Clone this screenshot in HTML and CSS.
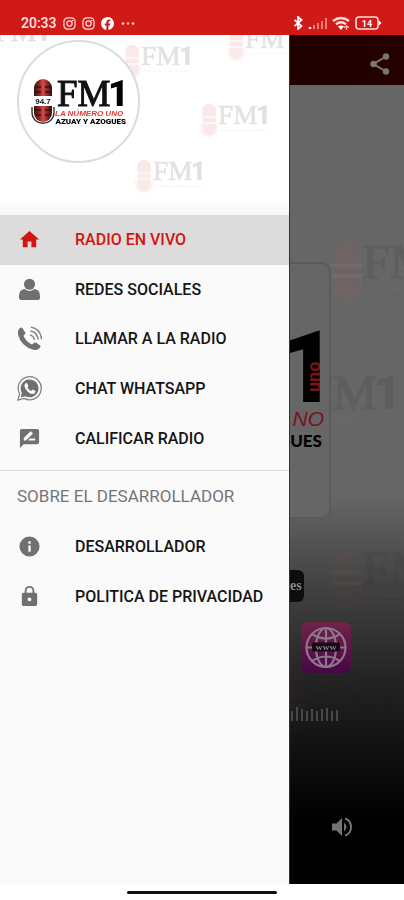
FILE: index.html
```html
<!DOCTYPE html>
<html lang="es">
<head>
<meta charset="utf-8">
<meta name="viewport" content="width=device-width, initial-scale=1">
<title>FM1 Radio</title>
<link rel="stylesheet" href="styles.css">
</head>
<body>
<svg class="defs" aria-hidden="true">
  <defs>
    <linearGradient id="mic-red" x1="0" x2="1">
      <stop offset="0" stop-color="#3a1414"/><stop offset=".3" stop-color="#8c2828"/><stop offset=".5" stop-color="#d84a48"/><stop offset=".75" stop-color="#8c2424"/><stop offset="1" stop-color="#301010"/>
    </linearGradient>
    <linearGradient id="web-pink" x1="0" y1="0" x2="0" y2="1">
      <stop offset="0" stop-color="#702447"/><stop offset="1" stop-color="#450745"/>
    </linearGradient>
    <symbol id="logo" viewBox="0 0 96 50">
      <rect x="3" y="2" width="18" height="43" rx="9" fill="url(#mic-red)"/>
      <path d="M4 10h6M14 10h6M4 15h6M14 15h6M4 33h6M14 33h6M5 38h5M14 38h5" stroke="#311" stroke-width="1.5"/>
      <path d="M0 19h24v10H0z" fill="#fff"/>
      <path d="M1 30v5c0 15 22 15 22 0v-5" fill="none" stroke="#333" stroke-width="1.4"/>
      <text x="12" y="27" class="logo-freq" text-anchor="middle">94.7</text>
      <text x="26" y="29" class="logo-fm">FM</text>
      <text x="77" y="29" class="logo-one">1</text>
      <text x="24" y="39" class="logo-script">LA NÚMERO UNO</text>
      <text x="95" y="47" class="logo-city" text-anchor="end">AZUAY Y AZOGUES</text>
    </symbol>
    <symbol id="mark" viewBox="0 0 94 50">
      <rect x="3" y="2" width="18" height="43" rx="9" fill="#c44"/>
      <path d="M0 19h24v3H0zM0 27h24v3H0z" fill="#fff" opacity=".6"/>
      <path d="M1 30v5c0 15 22 15 22 0v-5" fill="none" stroke="#c66" stroke-width="1.4"/>
      <text x="24" y="30" class="logo-fm">FM</text>
      <text x="75" y="30" class="logo-one">1</text>
      <path d="M26 38h66" stroke="#d88" stroke-width="3" stroke-dasharray="5 2" opacity=".5"/>
    </symbol>
    <symbol id="insta" viewBox="0 0 14 14">
      <rect x="1" y="1" width="12" height="12" rx="4" fill="none" stroke="#ffd9d6" stroke-width="1.3"/>
      <circle cx="7" cy="7" r="2.8" fill="none" stroke="#ffd9d6" stroke-width="1.3"/><circle cx="10.4" cy="3.8" r=".9" fill="#ffd9d6"/>
    </symbol>
  </defs>
</svg>

<div class="screen">
  <header class="status">
    <div class="status-left">
      <span class="clock">20:33</span>
      <svg width="13" height="13"><use href="#insta"/></svg>
      <svg width="13" height="13"><use href="#insta"/></svg>
      <svg width="13" height="13" viewBox="0 0 24 24"><path fill="#fff" d="M24 12a12 12 0 1 0-14 11.900V15.500H7V12h3V9.400C10 6.400 11.800 4.700 14.500 4.700c1.300 0 2.700.3 2.700.3v3h-1.500C14.200 8 13.800 8.900 13.800 9.800V12h3.300l-.5 3.500h-2.800v8.400A12 12 0 0 0 24 12z"/></svg>
      <svg width="16" height="13"><g fill="#ffc9c5"><circle cx="3" cy="6.500" r="1.300"/><circle cx="8" cy="6.500" r="1.300"/><circle cx="13" cy="6.500" r="1.300"/></g></svg>
    </div>
    <div class="status-right">
      <svg width="10" height="14" viewBox="0 0 10 16"><path d="M1 4.500l8 7L5 15V1l4 3.500-8 7" fill="none" stroke="#fff" stroke-width="2"/></svg>
      <svg width="19" height="13" viewBox="0 0 19 13"><path d="M2 10v2" stroke="#fff" stroke-width="2.500"/><path d="M6 8v4M10 6v6M14 4v8M18 1v11" stroke="#ee7b75" stroke-width="2"/></svg>
      <svg width="18" height="14" viewBox="0 0 18 14"><path d="M1 5q8-6 16 0M4 8.300q5-4 10 0" fill="none" stroke="#ffdcd9" stroke-width="2.300"/><path d="M6 10.500q3-2 6 0L9 14z" fill="#fff"/><path d="M12 11h5M14.500 9v5" stroke="#ffb5b0" stroke-width="1.300"/></svg>
      <svg width="27" height="14" viewBox="0 0 27 14"><rect x="1" y="1" width="22" height="12" rx="3" fill="none" stroke="#ffdcd9" stroke-width="1.600"/><path d="M24 4.500l2.500 2.500L24 9.500z" fill="#fff"/><text x="12" y="10.500" class="battery" text-anchor="middle">14</text></svg>
    </div>
  </header>

  <div class="body">
    <aside class="drawer">
      <div class="drawer-head">
        <svg class="marks" aria-hidden="true">
          <g opacity=".12">
            <use href="#mark" x="-25" y="-18" width="75" height="40"/>
            <use href="#mark" x="123" y="8" width="70" height="37"/>
            <use href="#mark" x="227" y="-9" width="70" height="37"/>
            <use href="#mark" x="200" y="67" width="70" height="37"/>
            <use href="#mark" x="135" y="123" width="70" height="37"/>
          </g>
        </svg>
        <div class="avatar"><svg width="96" height="50" role="img" aria-label="FM1"><use href="#logo"/></svg></div>
      </div>
      <nav>
        <ul class="menu main-menu">
          <li><a class="item active" href="#vivo"><svg class="icon" viewBox="0 0 24 24"><path d="M10 20v-6h4v6h5v-8h3L12 3 2 12h3v8z"/></svg>RADIO EN VIVO</a></li>
          <li><a class="item" href="#redes"><svg class="icon" viewBox="0 0 24 24"><circle cx="12" cy="6.500" r="5.800"/><path d="M7 11.500Q12 15.500 17 11.500Q23 12 23 19v1q0 3-3 3H4q-3 0-3-3v-1q0-7 6-7.500z"/></svg>REDES SOCIALES</a></li>
          <li><a class="item" href="#llamar"><svg class="icon wide" viewBox="0 0 26 26"><path d="M1.500 4Q4 .5 5.500 2.200L8.800 7Q9.200 8 6.700 10.200Q9 16 15.500 19.200L18 17.300Q19 16.700 20 17.500L24 20.300Q25 21 24 22.300Q21.500 25.500 18 25Q4 21.500 1 8.500Q.7 5.500 1.500 4z"/><path d="M13.500 9.500q4 .5 4.500 5M14 5.200q7 1 8 9M14.500 1.200q10 1.500 11 12.500" fill="none" stroke="#808080" stroke-width="1.500"/></svg>LLAMAR A LA RADIO</a></li>
          <li><a class="item" href="#chat"><svg class="icon wide" viewBox="0 0 26 26"><path d="M1 25l1.700-6.500A12 12 0 1 1 7.500 23.300z" fill="none" stroke="#808080" stroke-width="1.300"/><path d="M4 22l1-4.500A9.300 9.300 0 1 1 8.500 21z"/><path d="M8 8.500q1.500-2 2.700-.8l1.200 2.800-1 1.500q1.200 2.500 3.800 3.600l1.500-1.500 3 1.500q.5 1.500-1.200 2.600-3.500 1.500-7-2.200Q7 12 8 8.500z" fill="#fafafa"/></svg>CHAT WHATSAPP</a></li>
          <li><a class="item" href="#calificar"><svg class="icon" viewBox="0 0 24 24"><path d="M20 2H4c-1.100 0-2 .9-2 2v18l4-4h14c1.100 0 2-.9 2-2V4c0-1.100-.9-2-2-2zM6 14v-2.500l6.900-6.900c.2-.2.500-.2.700 0l1.800 1.800c.2.200.2.500 0 .7L8.500 14H6zm12 0h-7.500l2-2H18v2z"/></svg>CALIFICAR RADIO</a></li>
        </ul>
        <h2 class="subhead">SOBRE EL DESARROLLADOR</h2>
        <ul class="menu">
          <li><a class="item" href="#desarrollador"><svg class="icon" viewBox="0 0 24 24"><path d="M12 1.500a10.500 10.500 0 1 0 0 21 10.500 10.500 0 0 0 0-21zM13.200 17.500h-2.400V11h2.400zm0-8.500h-2.400V6.500h2.400z"/></svg>DESARROLLADOR</a></li>
          <li><a class="item" href="#privacidad"><svg class="icon" viewBox="0 0 24 24"><path d="M18 8h-1V6A5 5 0 0 0 7 6v2H6c-1.100 0-2 .9-2 2v10c0 1.100.9 2 2 2h12c1.100 0 2-.9 2-2V10c0-1.100-.9-2-2-2zm-6 9a2 2 0 1 1 0-4 2 2 0 0 1 0 4zm3.100-9H8.900V6a3.100 3.100 0 0 1 6.200 0z"/></svg>POLITICA DE PRIVACIDAD</a></li>
        </ul>
      </nav>
    </aside>

    <main class="player">
      <div class="toolbar">
        <button class="plain" aria-label="Compartir"><svg width="20" height="22" viewBox="0 0 20 22"><path d="M16 3.500L3.500 11 16 18.500" fill="none" stroke="#777" stroke-width="2"/><g fill="#777"><circle cx="16" cy="3.500" r="3.200"/><circle cx="3.500" cy="11" r="3.200"/><circle cx="16" cy="18.500" r="3.200"/></g></svg></button>
      </div>
      <div class="stage">
        <svg class="marks" aria-hidden="true">
          <g opacity=".09">
            <use href="#mark" x="40" y="153" width="126" height="67"/>
            <use href="#mark" x="-17" y="284" width="126" height="67"/>
            <use href="#mark" x="40" y="460" width="126" height="67" opacity=".6"/>
            <use href="#mark" x="-17" y="583" width="126" height="67" opacity=".3"/>
          </g>
        </svg>
        <div class="card">
          <svg width="35" height="124" viewBox="0 0 35 124">
            <text x="47" y="73" class="card-one" text-anchor="end">1</text>
            <text transform="translate(30 63) rotate(-90)" class="card-side">uno</text>
            <text x="34" y="97" class="card-script" text-anchor="end">NO</text>
            <text x="32" y="118" class="card-city" text-anchor="end">UES</text>
          </svg>
        </div>
        <div class="chip">es</div>
        <button class="plain web" aria-label="Sitio web"><svg width="50" height="51" viewBox="0 0 50 51"><rect width="50" height="51" rx="7" fill="url(#web-pink)"/><g fill="none" stroke="#91758c" stroke-width="2.200"><circle cx="25" cy="25.500" r="19.500"/><ellipse cx="25" cy="25.500" rx="10" ry="19.500"/><path d="M11 12q14 9 28 0M11 39q14-9 28 0M25 6v39M6 25.500h38"/></g><rect x="11" y="20.500" width="28" height="9" rx="2" fill="#160a15"/><text x="25" y="28" class="www" text-anchor="middle">WWW</text></svg></button>
        <svg class="bars" width="50" height="14" viewBox="0 0 50 14"><path d="M2 4v10M7 0v14M12 2v12M17 4v10M22 2v12M27 4v10M32 2v12M37 1v13M42 4v10M47 3v11" stroke="#484848" stroke-width="2"/></svg>
        <button class="plain volume" aria-label="Volumen"><svg width="22" height="20" viewBox="0 0 22 20"><path d="M1 6.500h4.500L11 1v18l-5.500-5.500H1zM13 5.500q5 4.500 0 9z" fill="#747474"/><path d="M14 1.500q6 2 6 8.500t-6 8.500" fill="none" stroke="#747474" stroke-width="2"/></svg></button>
      </div>
    </main>
  </div>
  <footer class="gesture"><span class="pill"></span></footer>
</div>
</body>
</html>
```
FILE: styles.css
```css
* { box-sizing: border-box; }
body { margin: 0; background: #fff; font-family: Roboto, "Liberation Sans", sans-serif; }
svg { display: block; flex: none; }
.defs { position: absolute; width: 0; height: 0; }
.screen { min-height: 100vh; display: flex; flex-direction: column; }

.status { display: flex; justify-content: space-between; height: 35px; padding: 11px 22px 0 21px; background: #d01a17; color: #fff; }
.status-left, .status-right { display: flex; align-items: center; height: 24px; }
.status-left { gap: 6px; }
.status-right { gap: 5px; }
.clock { font-size: 14px; font-weight: 500; color: #ffe4e2; }
.battery { font: 700 9px Roboto, sans-serif; fill: #fff; }

.body { flex: 1; display: flex; }
.drawer { width: 289px; flex: none; background: #fafafa; }
.drawer-head { position: relative; height: 180px; padding: 5px 17px; background: linear-gradient(#fff 90%, #f6f6f6); }
.marks { position: absolute; inset: 0; width: 100%; height: 100%; overflow: hidden; }
.avatar { position: relative; width: 123px; height: 123px; border: 2px solid #dadcdd; border-radius: 50%; background: #fff; display: flex; align-items: center; justify-content: center; }

.menu { list-style: none; margin: 0; padding: 0; display: grid; grid-auto-rows: 1fr; min-height: 99px; }
.main-menu { min-height: 248px; }
.item { display: flex; align-items: center; height: 100%; padding-left: 18px; gap: 34px; color: #151515; text-decoration: none; font-size: 16px; font-weight: 500; }
.item.active { background: #dcdcdc; color: #d41412; }
.icon { width: 23px; height: 23px; fill: #707070; }
.icon.wide { width: 25px; height: 25px; margin: 0 -1px; }
.active .icon { fill: #d41412; }
.subhead { margin: 7px 0 0; border-top: 1px solid #dedede; padding-left: 17px; font-size: 17px; font-weight: 400; line-height: 51px; color: #757575; }

.player { flex: 1; min-width: 0; display: flex; flex-direction: column; border-left: 1px solid #333; background: #000; }
.toolbar { height: 50px; display: flex; align-items: center; justify-content: flex-end; padding: 8px 14px 0; background: linear-gradient(90deg, #210000, #250000); }
.plain { border: 0; padding: 0; background: none; }
.stage { flex: 1; position: relative; overflow: hidden; display: flex; flex-direction: column; align-items: flex-start; padding-top: 177px; background: linear-gradient(#666 0, #666 410px, #424242 500px, #252525 590px, #121212 660px, #000 740px); }
.card { position: relative; width: 41px; height: 257px; padding-top: 65px; border: 2px solid #5a5a5a; border-left: 0; border-radius: 0 10px 10px 0; background: #666; }
.chip { position: relative; margin-top: 51px; width: 14px; height: 32px; border-radius: 0 6px 6px 0; background: #0d0d0d; color: #8a8a8a; font: 700 14px/32px "Liberation Serif", serif; }
.web { position: relative; margin: 20px 0 0 11px; }
.bars { position: relative; margin: 34px 0 0; }
.volume { position: relative; margin: 96px 0 0 41px; }

.logo-freq { font: 700 8px "Liberation Sans", sans-serif; fill: #111; }
.logo-fm { font: 37px "Liberation Serif", serif; fill: #111; stroke: #111; stroke-width: 1; }
.logo-one { font: 900 36px Roboto, sans-serif; fill: #000; }
.logo-script { font: italic 700 8px "Liberation Sans", sans-serif; fill: #e03a38; }
.logo-city { font: 900 8px Roboto, sans-serif; fill: #000; }
.card-one { font: 900 101px Roboto, sans-serif; fill: #000; }
.card-side { font: 700 18px Roboto, sans-serif; fill: #7e1111; }
.card-script { font: italic 21px "Liberation Sans", sans-serif; fill: #7b1220; }
.card-city { font: 900 17px Lato, sans-serif; fill: #000; }
.www { font: 700 7px "Liberation Serif", serif; fill: #99879a; }

.gesture { height: 16px; display: flex; justify-content: center; align-items: center; background: #fff; }
.pill { width: 150px; height: 3px; border-radius: 2px; background: #111; }
```
